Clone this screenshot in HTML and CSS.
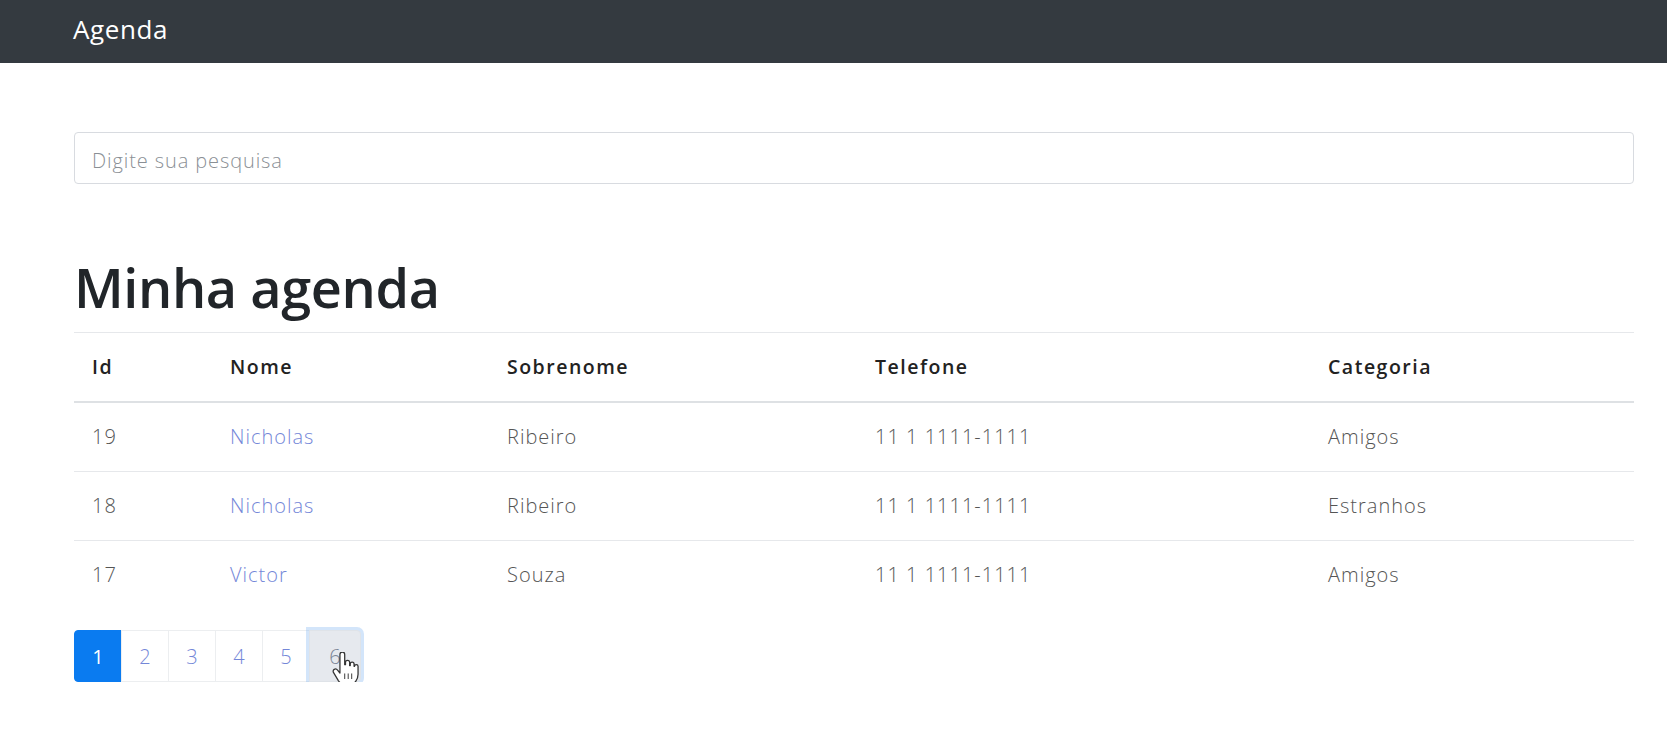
FILE: index.html
```html
<!DOCTYPE html>
<html lang="pt">
<head>
<meta charset="utf-8">
<title>Agenda</title>
<link rel="stylesheet" href="styles.css">
</head>
<body>
<nav class="navbar"><a class="brand" href="#">Agenda</a></nav>
<main class="container">
  <input class="search" type="text" placeholder="Digite sua pesquisa">
  <h1 class="title">Minha agenda</h1>
  <table class="table">
    <colgroup>
      <col class="c-id"><col class="c-nome"><col class="c-sobre"><col class="c-tel"><col class="c-cat">
    </colgroup>
    <thead>
      <tr><th>Id</th><th>Nome</th><th>Sobrenome</th><th>Telefone</th><th>Categoria</th></tr>
    </thead>
    <tbody>
      <tr><td>19</td><td><a href="#">Nicholas</a></td><td>Ribeiro</td><td>11 1 1111-1111</td><td>Amigos</td></tr>
      <tr><td>18</td><td><a href="#">Nicholas</a></td><td>Ribeiro</td><td>11 1 1111-1111</td><td>Estranhos</td></tr>
      <tr><td>17</td><td><a href="#">Victor</a></td><td>Souza</td><td>11 1 1111-1111</td><td>Amigos</td></tr>
    </tbody>
  </table>
  <ul class="pagination">
    <li class="page active"><span>1</span></li>
    <li class="page"><a href="#">2</a></li>
    <li class="page"><a href="#">3</a></li>
    <li class="page"><a href="#">4</a></li>
    <li class="page"><a href="#">5</a></li>
    <li class="page focused"><a href="#">6</a>
      <svg class="cursor" width="27" height="35" viewBox="0 0 17 22" aria-hidden="true">
        <path d="M5 1.5c0-.8.6-1.5 1.5-1.5S8 .7 8 1.5V8h.5V6.5c0-.8.6-1.3 1.3-1.3s1.3.5 1.3 1.3v2h.4v-1c0-.7.6-1.2 1.2-1.2s1.2.5 1.2 1.2V9h.3c0-.6.5-1 1.1-1s1.1.4 1.1 1v5c0 3-2 6.5-5 6.5H8c-2 0-3-1-4-2.5L1 13c-.5-.8-.3-1.7.4-2.1s1.6-.2 2.1.5L5 13.2Z" fill="#fff" stroke="#333" stroke-width="0.8" stroke-linejoin="round"/>
        <path d="M8 13.5v3.5M10.2 13.5v3.5M12.4 13.5v3.5" stroke="#333" stroke-width="0.6" fill="none"/>
      </svg>
    </li>
  </ul>
</main>
</body>
</html>
```

FILE: styles.css
```css
* { box-sizing: border-box; }

body {
  margin: 0;
  font-family: "Open Sans", "Noto Sans", "Liberation Sans", sans-serif;
  color: #4a4a4a;
  background: #fff;
}

.navbar {
  height: 63px;
  background: #343a40;
  display: flex;
  align-items: center;
  padding-left: 73px;
  padding-bottom: 5px;
}

.brand {
  color: #fff;
  text-decoration: none;
  font-size: 26px;
  font-weight: 400;
  letter-spacing: 0.6px;
}

.container {
  padding: 69px 33px 0 74px;
}

.search {
  display: block;
  width: 100%;
  height: 52px;
  border: 1px solid #d8dbe0;
  border-radius: 4px;
  padding: 4px 17px 0;
  font-family: inherit;
  font-size: 20px;
  font-weight: 300;
  letter-spacing: 0.9px;
  color: #495057;
  outline: none;
}

.search::placeholder {
  color: #8a8f95;
}

.title {
  margin: 70px 0 12px;
  font-size: 54px;
  font-weight: 600;
  line-height: 66px;
  color: #212529;
  letter-spacing: -0.4px;
}

.table {
  width: 100%;
  border-collapse: collapse;
  table-layout: fixed;
}

.c-id { width: 138px; }
.c-nome { width: 277px; }
.c-sobre { width: 368px; }
.c-tel { width: 453px; }
.c-cat { width: 324px; }

.table th,
.table td {
  text-align: left;
  vertical-align: middle;
  padding: 19px 18px;
  line-height: 30px;
  border-top: 1px solid #e6e8eb;
  font-size: 20px;
  white-space: nowrap;
}

.table th {
  font-weight: 600;
  color: #222;
  font-size: 19.5px;
  letter-spacing: 1.5px;
  border-bottom: 2px solid #dee1e4;
}

.table td {
  font-weight: 300;
  color: #555;
  letter-spacing: 1px;
}

.table td a {
  color: #7487d8;
  text-decoration: none;
}

.pagination {
  list-style: none;
  display: flex;
  margin: 21px 0 0;
  padding: 0;
}

.page {
  position: relative;
  width: 48px;
  height: 52px;
  display: flex;
  border: 1px solid #eceef0;
  margin-left: -1px;
  font-size: 20px;
  font-weight: 300;
}

.page:first-child {
  margin-left: 0;
  border-radius: 4px 0 0 4px;
}

.page span,
.page a {
  flex: 1;
  display: flex;
  align-items: center;
  justify-content: center;
  color: #7487d8;
  text-decoration: none;
}

.page.active {
  background: #0a7bf0;
  border-color: #0a7bf0;
}

.page.active span {
  color: #fff;
  font-weight: 400;
}

.page.focused {
  width: 52px;
  background: #e6e9ee;
  border-color: #dfe3e8;
  border-radius: 0 4px 4px 0;
  box-shadow: 0 0 0 3px rgba(130, 180, 240, 0.35);
  z-index: 1;
}

.page.focused a {
  color: #7a8596;
}

.cursor {
  position: absolute;
  left: 22px;
  top: 21px;
}
```
